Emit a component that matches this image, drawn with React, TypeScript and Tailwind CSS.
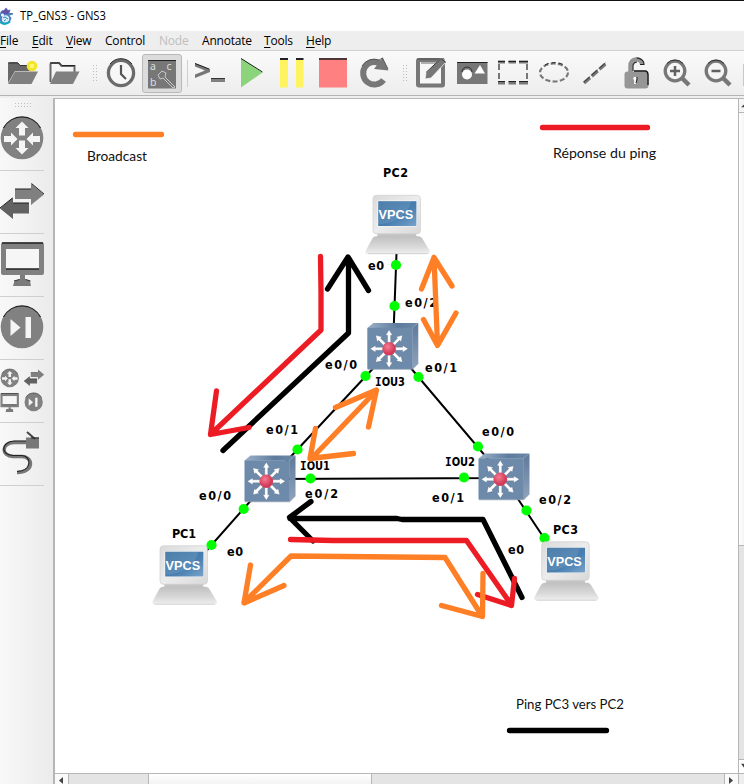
import type { ReactNode } from 'react';

const menus = [
  { label: 'File', width: 'w-[32px]', key: true },
  { label: 'Edit', width: 'w-[34px]', key: true },
  { label: 'View', width: 'w-[39px]', key: true },
  { label: 'Control', width: 'w-[54px]', key: false },
  { label: 'Node', width: 'w-[43px]', key: false, disabled: true },
  { label: 'Annotate', width: 'w-[62px]', key: false },
  { label: 'Tools', width: 'w-[42px]', key: true },
  { label: 'Help', width: 'w-[40px]', key: true },
];

function Tool({ x, w, children }: { x: number; w: number; children?: ReactNode }) {
  return (
    <svg className="h-[44px] shrink-0" width={w} viewBox={`${x} 52 ${w} 44`} fill="none">
      {children}
    </svg>
  );
}

function Side({ y, h, children }: { y: number; h: number; children: ReactNode }) {
  return (
    <div className="w-[44px] shrink-0 border-b border-[#cfcfcf]">
      <svg className="block" width="44" height={h} viewBox={`0 ${y} 44 ${h}`} fill="none">
        {children}
      </svg>
    </div>
  );
}

function Grip({ x }: { x: number }) {
  const rows = [66, 69, 72, 75, 78, 81];
  return (
    <g fill="#bdbdbd">
      {rows.map((y) => (
        <g key={y}>
          <rect x={x} y={y} width="1" height="1" />
          <rect x={x + 3} y={y} width="1" height="1" />
        </g>
      ))}
    </g>
  );
}

function RouterIcon() {
  return (
    <g>
      <circle cx="22" cy="138" r="21.3" fill="#818181" />
      <path d="M3.500 128A21 21 0 0 1 40.500 128" stroke="#222" strokeWidth="1.2" />
      {[0, 180].map((a) => (
        <path key={a} transform={`rotate(${a} 22 138)`} d="M22 121.500L28.500 128H25V135.500H19V128H15.500Z" fill="#f5f5f5" />
      ))}
      <path d="M4 136H11V132.500L17.500 139L11 145.500V142H4Z" fill="#f5f5f5" />
      <path d="M40 136H33V132.500L26.500 139L33 145.500V142H40Z" fill="#f5f5f5" />
    </g>
  );
}

function SwitchIcon() {
  return (
    <g>
      <path d="M15 189H31V183.500L44 194.500L31 205V199H15Z" fill="#808080" />
      <path d="M15 189H31M31.500 183.500L44 194" stroke="#222" />
      <path d="M29 203H13V197.500L0 208.500L13 219V213.500H29Z" fill="#626262" />
      <path d="M29 203H13M12.500 198L0 208" stroke="#1c1c1c" />
    </g>
  );
}

function ScreenIcon() {
  return (
    <g>
      <rect x="1" y="242.500" width="43" height="32.500" rx="2" fill="#808080" />
      <path d="M2 243H43" stroke="#222" strokeWidth="1.4" />
      <rect x="6" y="249" width="33" height="20" fill="#f6f6f6" />
      <path d="M6 269H39" stroke="#222" strokeWidth="1.4" />
      <path d="M20 275H25V279L30 281L31 286H13L14.500 281L20 279Z" fill="#7b7b7b" />
      <path d="M14 281L19.500 279.500M25.500 279.500L30.500 281" stroke="#333" />
    </g>
  );
}

function NextIcon() {
  return (
    <g>
      <circle cx="22" cy="327" r="21.300" fill="#818181" />
      <path d="M3.500 317A21 21 0 0 1 40.500 317" stroke="#222" strokeWidth="1.2" />
      <path d="M10.500 319L20.500 327.500L10.500 336Z M25.500 317H31V338H25.500Z" fill="#f5f5f5" />
    </g>
  );
}

function Pc({ x, y }: { x: number; y: number }) {
  return (
    <g transform={`translate(${x} ${y})`}>
      <path d="M12 38H51V42H12Z" fill="#c4c4c4" />
      <rect x="7.700" y=".3" width="47.500" height="38.500" rx="3.500" fill="url(#case)" stroke="#cfcfcf" strokeWidth=".7" />
      <rect x="12.200" y="5.500" width="39.500" height="26" fill="#f7f7f7" />
      <rect x="12.900" y="6.200" width="38.200" height="24.800" fill="url(#screen)" />
      <path d="M12.900 29C29 29 43 20 46 6.200H12.900Z" fill="#fff" opacity=".1" />
      <path d="M10.500 41.200H53.500Q56 41.500 57 43.500L64.300 55.500Q65.500 59 62 59H2.500Q-.8 59 .5 55.500L7 43.500Q8 41.500 10.500 41.200Z" fill="url(#base)" />
      <path d="M2.500 58.700H62.500" stroke="#c4c4c4" strokeWidth=".7" />
      <text x="13.300" y="24.300" fontSize="12" fontWeight="700" textLength="34.500" lengthAdjust="spacingAndGlyphs" fill="#fff" fontFamily="Liberation Sans, Arial, sans-serif">VPCS</text>
    </g>
  );
}

function Iou({ x, y }: { x: number; y: number }) {
  return (
    <g transform={`translate(${x} ${y})`}>
      <path d="M0 5.500L6 .5H51L45 5.500Z" fill="url(#top)" />
      <path d="M45 5.500L51 .5V41L45 47Z" fill="url(#edge)" />
      <rect x="0" y="5.300" width="45.300" height="41.500" rx="1" fill="#6d8aaa" />
      <path d="M.5 46.800H45L51 41" stroke="#97a4b2" fill="none" strokeWidth=".7" />
      {[0, 45, 90, 135, 180, 225, 270, 315].map((a) => (
        <path key={a} transform={`translate(21.800 26.300) rotate(${a})`} d="M-1.500 -5V-13.500H-3.400L0 -19L3.400 -13.500H1.500V-5Z" fill="#fff" stroke="#4e6680" strokeWidth=".3" />
      ))}
      <circle cx="21.800" cy="26.300" r="6.800" fill="url(#ball)" />
    </g>
  );
}

const ports: [number, number][] = [
  [396, 265], [394.500, 306], [365.500, 376], [418.500, 377], [297.500, 449.500], [310.500, 478.500],
  [243.700, 509], [211.500, 545], [478, 446.500], [464, 477.500], [526.500, 510.500], [544.500, 538],
];

const labels: [string, number, number, number][] = [
  ['PC2', 383, 177, 25], ['e0', 368, 270, 16], ['e0/2', 405, 307, 32], ['e0/0', 325, 369, 32],
  ['e0/1', 425, 372, 32], ['IOU3', 375, 386, 30], ['e0/1', 266, 434, 32], ['IOU1', 300, 470, 30],
  ['e0/2', 305, 498, 33], ['e0/0', 199, 500, 32], ['PC1', 172, 538, 24], ['e0', 227, 556, 16],
  ['e0/0', 482, 436, 32], ['IOU2', 445, 466, 30], ['e0/1', 432, 502, 32], ['e0/2', 539, 504, 32],
  ['PC3', 553, 534, 25], ['e0', 508, 554, 16],
];

function Topology() {
  return (
    <svg className="block h-full w-full" viewBox="55 99 683 674">
      <defs>
        <linearGradient id="case" x1="0" y1="0" x2="1" y2="1">
          <stop stopColor="#dadada" /><stop offset=".5" stopColor="#ececec" /><stop offset="1" stopColor="#d8d8d8" />
        </linearGradient>
        <linearGradient id="screen" x1="0" y1="0" x2="1" y2="1">
          <stop stopColor="#38709f" /><stop offset=".6" stopColor="#4a80b1" /><stop offset="1" stopColor="#78a3ca" />
        </linearGradient>
        <linearGradient id="base" x1="0" y1="0" x2="0" y2="1">
          <stop stopColor="#c0c0c0" /><stop offset=".6" stopColor="#d9d9d9" /><stop offset="1" stopColor="#f0f0f0" />
        </linearGradient>
        <linearGradient id="top"><stop stopColor="#9bb1c8" /><stop offset=".6" stopColor="#5d7b9d" /><stop offset="1" stopColor="#6e8aa8" /></linearGradient>
        <linearGradient id="edge" x1="0" y1="0" x2="0" y2="1"><stop stopColor="#60799a" /><stop offset="1" stopColor="#8fa4bd" /></linearGradient>
        <radialGradient id="ball" cx=".4" cy=".35"><stop stopColor="#f37d91" /><stop offset="1" stopColor="#d33b59" /></radialGradient>
      </defs>
      <path d="M397 240L393 347L269 480L185 575M393 347L504 478L269 479M504 478L566 571" fill="none" stroke="#000" strokeWidth="2" />
      {ports.map(([x, y]) => <circle key={`${x}-${y}`} cx={x} cy={y} r="5.100" fill="#00ff00" />)}
      <Pc x={365.300} y={195} />
      <Pc x={152.300} y={545.500} />
      <Pc x={534} y={541.500} />
      <Iou x={367.300} y={322.500} />
      <Iou x={244.500} y={455} />
      <Iou x={478.500} y={453} />
      <g fontFamily="DejaVu Sans Condensed, DejaVu Sans, Verdana, sans-serif" fontWeight="700" fontSize="12.500">
        {labels.map(([t, x, y, w], i) => (
          <text key={i} x={x} y={y} textLength={w} lengthAdjust={t[0] === 'I' ? 'spacingAndGlyphs' : 'spacing'}>
            {t[0] === 'I' ? <><tspan fontFamily="DejaVu Sans Mono, monospace">I</tspan>{t.slice(1)}</> : t}
          </text>
        ))}
      </g>
      <g fill="none" strokeWidth="5.300" strokeLinecap="round" strokeLinejoin="round">
        <g stroke="#000">
          <path d="M223 450.500L348.500 333V258M327.500 289L348 257L368.500 290.500" />
          <path d="M522 597.500L483 519.500H402L397 518.500H290M311 501.500L289.500 517.500L313 541" />
          <path d="M509.500 730.500H606.500" />
        </g>
        <g stroke="#ed1c24">
          <path d="M320.500 256.500L321 292V330L211 434M216.500 391L210.500 434.500L249 427.500" />
          <path d="M290.500 539.500L333 540.500H466.500L511.500 605M477.500 594.500L511.500 605.500L514.500 578.500" />
          <path d="M542.500 127.500H647.500" />
        </g>
        <g stroke="#ff7f27">
          <path d="M434 257.500L437.500 345M421.500 289L434 257.500L452 286M423.500 319.500L437.500 345.500L456 313" />
          <path d="M311 459L376 391M335.500 407.500L376.500 390L368.500 427M315.500 428.500L310 458.500L353.500 453.500" />
          <path d="M244 602.500L291 556L445 557.500L482 616M250.500 565L244 603L284 585.500M441.500 605.500L482.500 616.500L483 573.500" />
          <path d="M75.500 134.500H161.500" />
        </g>
      </g>
      <g fontFamily="Lato, Carlito, sans-serif" fontSize="14" fill="#111">
        <text x="87" y="161" textLength="60" lengthAdjust="spacingAndGlyphs">Broadcast</text>
        <text x="553" y="158" textLength="103" lengthAdjust="spacingAndGlyphs">Réponse du ping</text>
        <text x="516" y="709" textLength="108" lengthAdjust="spacingAndGlyphs">Ping PC3 vers PC2</text>
      </g>
    </svg>
  );
}

function Toolbar() {
  return (
    <div className="flex h-[45px] shrink-0 overflow-hidden border-b border-[#b4b4b4] bg-linear-to-b from-[#fafafa] to-[#ededed]">
      <Tool x={0} w={44}>
        <path d="M8 84V65Q8 63 10 63H17L20 66H33V72H15Z" fill="#686868" />
        <path d="M8 64H18L20 66.500H30" stroke="#333" />
        <circle cx="32" cy="67" r="5.300" fill="#f3e52c" /><circle cx="32" cy="67" r="2.200" fill="#fff978" />
        <path d="M15 72.500H38L31.500 85H8Z" fill="#808080" />
      </Tool>
      <Tool x={44} w={44}>
        <path d="M50.500 83V65Q50.500 64 52 64H59L61.500 67H74.500V73" stroke="#696969" strokeWidth="2" />
        <path d="M50 64H59.500L62 66.500H75" stroke="#222" />
        <path d="M56 72.500H79.500L73 85H50Z" fill="#808080" />
      </Tool>
      <Tool x={88} w={16}><Grip x={93} /></Tool>
      <Tool x={104} w={38}>
        <circle cx="121" cy="74" r="12.600" fill="#f7f7f7" stroke="#6b6b6b" strokeWidth="3.300" />
        <path d="M110 65A14 14 0 0 1 132 65" stroke="#333" />
        <path d="M121 66V75L126 80" stroke="#555" strokeWidth="2.200" />
      </Tool>
      <div className="mt-[3px] flex h-[39px] w-[40px] shrink-0 items-center justify-center rounded-[3px] border border-[#b8b8b8] bg-[#dcdcdc]">
        <svg width="30" height="30" viewBox="147 59 30 30">
          <rect x="148" y="60" width="28" height="28.500" fill="#777" />
          <path d="M148 60.500H176" stroke="#222" />
          <g fill="#ddd" fontSize="10.500" fontFamily="Noto Sans, sans-serif"><text x="150" y="70">a</text><text x="166.500" y="70">c</text><text x="150" y="86">b</text></g>
          <path d="M158 75L162 71L166 73L165 77L175 87L173 88L163 78L160 79Z" fill="#777" stroke="#ddd" strokeWidth=".8" />
        </svg>
      </div>
      <Tool x={182} w={9}><path d="M187.500 61V88" stroke="#cfcfcf" /></Tool>
      <Tool x={191} w={43}>
        <path d="M195 64L210 70V73L195 79V75.500L205 71.500L195 67.500Z" fill="#777" />
        <path d="M195 64.500L209 70" stroke="#222" />
        <path d="M211 79H225V83H211Z" fill="#808080" /><path d="M211 79.500H225" stroke="#333" />
      </Tool>
      <Tool x={234} w={38}><path d="M241 59V88.500L262.500 73.500Z" fill="#8bd47c" /><path d="M241 59.500L262.500 73" stroke="#222" /></Tool>
      <Tool x={272} w={41}><path d="M280 59H288V88.500H280ZM296 59H303.500V88.500H296Z" fill="#fff35f" /><path d="M280 60H288M296 60H303.500" stroke="#222" strokeWidth="1.800" /></Tool>
      <Tool x={313} w={40}><rect x="319" y="59" width="28" height="29.500" fill="#ff8080" /><path d="M319 60H347" stroke="#222" strokeWidth="1.600" /></Tool>
      <Tool x={353} w={42}>
        <path d="M383.500 81A11.300 11.300 0 1 1 381 65" stroke="#777" strokeWidth="6" />
        <path d="M382.500 58.500L388.500 71.500L374 70Z" fill="#777" />
        <path d="M362 67A14 14 0 0 1 379 61L382.500 59L388 70" stroke="#444" strokeWidth=".8" />
      </Tool>
      <Tool x={395} w={16}><Grip x={403} /></Tool>
      <Tool x={411} w={41}>
        <rect x="418" y="61" width="25" height="25.500" rx="1" fill="#f7f7f7" stroke="#777" strokeWidth="4" />
        <path d="M417 60H444M421 64H440" stroke="#444" strokeWidth=".8" />
        <path d="M425 80L426 74L441 59L446 63L431 79Z" fill="#777" stroke="#f5f5f5" strokeWidth=".8" />
        <path d="M426 73.500L441 59.500L446 63.500" stroke="#333" />
      </Tool>
      <Tool x={452} w={41}>
        <rect x="457" y="63" width="30.500" height="22" fill="#777" /><path d="M457 63.500H487.500" stroke="#222" />
        <circle cx="467" cy="75.500" r="5" fill="#fff" /><path d="M462 73A5 5 0 0 1 472 73" stroke="#333" />
        <path d="M480 66L485 74.500H474.500Z" fill="#fff" />
      </Tool>
      <Tool x={493} w={41}>
        <path d="M498 63H505M508.500 63H516M519 63H528M498 84H505M508.500 84H516M519 84H528" stroke="#777" strokeWidth="3" />
        <path d="M498 62.500H505M508.500 62.500H516M519 62.500H528M498 82.500H505M508.500 82.500H516M519 82.500H528" stroke="#222" strokeWidth="1.200" />
        <path d="M499 65V71M499 74V80M527 65V71M527 74V80" stroke="#777" strokeWidth="2" />
      </Tool>
      <Tool x={534} w={41}><ellipse cx="554" cy="73.500" rx="14" ry="9" stroke="#777" strokeWidth="2.200" strokeDasharray="5 2.300" /><path d="M545 66A14 9 0 0 1 564 66" stroke="#222" strokeDasharray="4 3" /></Tool>
      <Tool x={575} w={41}><path d="M584 84L606.500 64" stroke="#777" strokeWidth="3.500" strokeDasharray="8 2.300" /><path d="M584 83L606.500 63" stroke="#333" strokeDasharray="8 2.300" /></Tool>
      <Tool x={616} w={41}>
        <path d="M630.500 74V67C630 58.500 641.500 58.500 642 65" stroke="#949494" strokeWidth="4.500" />
        <path d="M637 59Q644 60 644 65.500H640M633 72V66Q634 63 637 63" stroke="#222" strokeWidth="1.100" />
        <rect x="624.500" y="72.500" width="24" height="17" rx="3" fill="#969696" />
        <path d="M634 72H645Q648 72 648 76V86" stroke="#111" strokeWidth="1.300" />
        <circle cx="635" cy="79.500" r="1.700" fill="#fff" /><path d="M635 79V85" stroke="#fff" strokeWidth="1.700" /><path d="M637 78V81L636 84" stroke="#222" />
      </Tool>
      {[675, 716].map((cx) => (
        <Tool key={cx} x={cx - 18} w={41}>
          <path d={`M${cx + 7} 79L${cx + 14} 86`} stroke="#777" strokeWidth="4.500" />
          <circle cx={cx} cy="72" r="9.800" fill="#f5f5f5" stroke="#777" strokeWidth="3.300" />
          <path d={`M${cx - 8} 64.500A11 11 0 0 1 ${cx + 8} 64.500`} stroke="#333" />
          <path d={cx === 675 ? 'M670 72H680M675 67V77' : 'M711.500 72H720.500'} stroke="#606060" strokeWidth="2.500" />
        </Tool>
      ))}
      <div className="ml-[4px] mt-[13px] h-[22px] w-[2px] bg-[#c8c8c8]" />
    </div>
  );
}

function Sidebar() {
  return (
    <aside className="flex w-[53px] shrink-0 flex-col overflow-hidden bg-linear-to-r from-[#f8f8f8] to-[#ebebeb]">
      <Side y={98} h={72}>
        <g fill="#bdbdbd">
          {[15, 18, 21, 24, 27, 30].map((x) => <g key={x}><rect x={x} y="103" width="1" height="1" /><rect x={x} y="106" width="1" height="1" /></g>)}
        </g>
        <RouterIcon />
      </Side>
      <Side y={171} h={62}><SwitchIcon /></Side>
      <Side y={234} h={62}><ScreenIcon /></Side>
      <Side y={297} h={62}><NextIcon /></Side>
      <Side y={360} h={62}>
        <g transform="translate(.3 318.800) scale(.43)"><RouterIcon /></g>
        <g transform="translate(24 287.500) scale(.45)"><SwitchIcon /></g>
        <g transform="translate(0 289) scale(.43)"><ScreenIcon /></g>
        <g transform="translate(24.200 261.400) scale(.43)"><NextIcon /></g>
      </Side>
      <Side y={423} h={62}>
        <path d="M27 442.500H14C1 443 1 456 13 456.500H22C34 457 34 472.500 17 472.500" stroke="#777" strokeWidth="3.500" />
        <path d="M27 441H14C1 441.500 0 455 13 455.500H22C32 456 32 471 17 471.500" stroke="#222" strokeWidth="1.200" />
        <rect x="26" y="437.500" width="13" height="11" fill="#777" /><path d="M27 432L35 439" stroke="#444" strokeWidth="2" /><path d="M31 438H39" stroke="#222" />
      </Side>
    </aside>
  );
}

export default function App() {
  return (
    <div className="flex h-[784px] w-[744px] flex-col overflow-hidden bg-white text-black">
      <header className="flex h-[31px] shrink-0 items-center border-t border-[#111]">
        <svg className="h-[18px] w-[14px] shrink-0" viewBox="0 6 14 18">
          <path d="M0 13Q0 10 3 9L4 10L6 6.500L8 9L10.500 8.500L9.500 12H13V13.500L9.500 14.500L11.500 17L10 21L6 23L1 22L0 20Z" fill="#4d80bd" />
          <path d="M1 11L4 9L6 7L8 10L10 9L8 13L4 13Z" fill="#6552a8" />
          <circle cx="5.500" cy="18" r="3.700" fill="#d8edfb" /><circle cx="2.500" cy="14" r="1.500" fill="#f5f7ff" />
          <path d="M3 17L5 16L8 18M4 20L6 18.500" stroke="#238fc2" fill="none" /><path d="M0 21Q5 25 10 20.500" stroke="#13a6c1" strokeWidth="2" fill="none" />
        </svg>
        <svg className="ml-[6px] h-[20px] w-[100px]" viewBox="0 0 100 20"><text x="0" y="14" fontSize="12" textLength="86" lengthAdjust="spacingAndGlyphs" fontFamily="Open Sans, Noto Sans, sans-serif">TP_GNS3 - GNS3</text></svg>
      </header>
      <nav className="flex h-[20px] shrink-0 items-center border-b border-[#d0d0d0] bg-[#eeeeee] font-['Open_Sans','Noto_Sans',sans-serif] text-[12px] leading-none tracking-[-0.2px]">
        {menus.map((m) => (
          <span key={m.label} className={`${m.width} shrink-0 whitespace-nowrap ${m.disabled ? 'text-[#bebebe]' : ''}`}>
            {m.key ? <><span className="underline underline-offset-2">{m.label[0]}</span>{m.label.slice(1)}</> : m.label}
          </span>
        ))}
      </nav>
      <Toolbar />
      <div className="h-[2px] shrink-0 bg-[#eeeeee]" />
      <div className="flex min-h-0 flex-1">
        <Sidebar />
        <main className="flex min-w-0 flex-1 flex-col border-l-2 border-t border-[#b6b6b6]">
          <div className="flex h-[674px] shrink-0">
            <div className="w-[683px] shrink-0"><Topology /></div>
            <div className="flex w-[6px] shrink-0 flex-col overflow-hidden border-l border-[#b6b6b6] bg-[#f5f5f5]">
              <svg className="h-[14px] w-[5px] shrink-0 border-b border-[#b6b6b6]" viewBox="0 0 5 14"><path d="M2 9L6 5V9Z" fill="#444" /></svg>
              <div className="h-[433px] shrink-0 border-b border-[#b6b6b6] bg-linear-to-r from-white to-[#f4f4f4]" />
              <div className="flex-1 bg-[#e4e4e4]" />
              <svg className="h-[14px] w-[5px] shrink-0 border-t border-[#b6b6b6] bg-white" viewBox="0 0 5 14"><path d="M2 4H8L5 8Z" fill="#444" /></svg>
            </div>
          </div>
          <div className="flex flex-1 border-t border-[#b6b6b6] bg-[#e4e4e4]">
            <div className="flex w-[14px] shrink-0 justify-center border-r border-[#b6b6b6] bg-[#fafafa]"><svg width="13" height="10" viewBox="0 0 13 10"><path d="M8 3V10L4 6.500Z" fill="#444" /></svg></div>
            <div className="w-[79px] shrink-0 bg-[#e4e4e4]" />
            <div className="w-[224px] shrink-0 border-x border-[#b6b6b6] bg-linear-to-b from-white to-[#f3f3f3]" />
            <div className="flex-1" />
            <div className="flex w-[15px] shrink-0 justify-center border-x border-[#b6b6b6] bg-[#fafafa]"><svg width="13" height="10" viewBox="0 0 13 10"><path d="M4 3V10L8 6.500Z" fill="#444" /></svg></div>
            <div className="w-[5px] shrink-0 bg-[#eeeeee]" />
          </div>
        </main>
      </div>
    </div>
  );
}
